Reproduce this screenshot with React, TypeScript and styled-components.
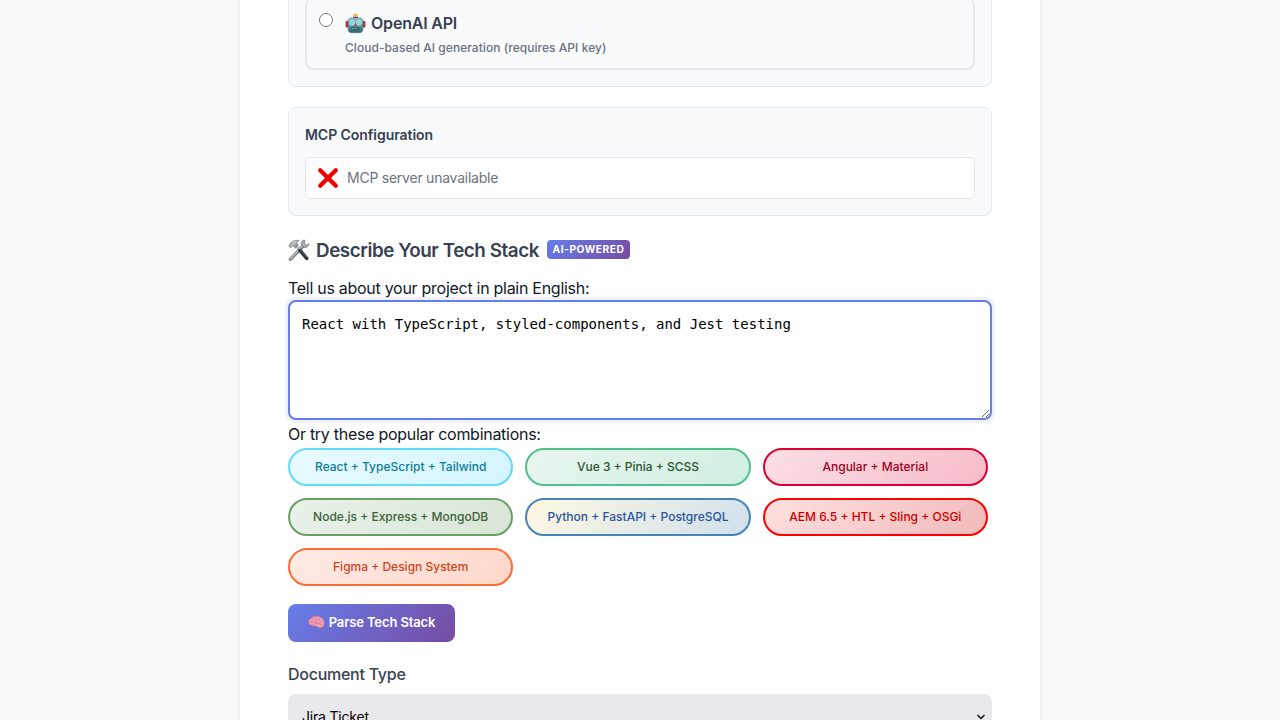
import React from 'react';
import styled, { createGlobalStyle } from 'styled-components';

const GlobalStyle = createGlobalStyle`
  * { box-sizing: border-box; }
  html, body { margin: 0; height: 720px; overflow: hidden; background: #f8fafc; }
  body { font-family: Inter, "Liberation Sans", sans-serif; font-size: 16px; color: #111827; }
`;

const Page = styled.div`
  height: 720px;
  overflow: hidden;
  background: #f8fafc;
  display: flex;
  justify-content: center;
`;

const Sheet = styled.main`
  width: 800px;
  height: 720px;
  padding: 0 48px;
  overflow: hidden;
  background: #fff;
  box-shadow: 0 1px 6px rgba(0, 0, 0, 0.1);
  display: flex;
  flex-direction: column;
`;

const Text = styled.span<{ $spacing?: number }>`
  white-space: nowrap;
  letter-spacing: ${(p) => p.$spacing ?? 0}px;
`;

const Panel = styled.section<{ $clipped?: boolean }>`
  flex: none;
  height: ${(p) => (p.$clipped ? 95 : 109)}px;
  margin-top: ${(p) => (p.$clipped ? -8 : 20)}px;
  padding: ${(p) => (p.$clipped ? '4px' : '16px')} 16px 16px;
  background: #f8fafc;
  border: 1px solid #e2e8f0;
  border-radius: 8px;
`;

const Option = styled.label`
  display: flex;
  height: 73px;
  padding: 14px 12px 0;
  border: 2px solid #e5e7eb;
  border-radius: 8px;
`;

const Radio = styled.input`
  width: 14px;
  height: 14px;
  margin: 0 12px 0 0;
  flex: none;
`;

const OptionBody = styled.div`
  display: flex;
  flex-direction: column;
`;

const OptionTitle = styled.div`
  display: flex;
  align-items: center;
  gap: 5px;
  height: 20px;
  font-size: 16px;
  font-weight: 600;
  color: #374151;
`;

const OptionHint = styled.div`
  margin-top: 7px;
  font-size: 12px;
  line-height: 16px;
  font-weight: 500;
  color: #6b7280;
`;

const PanelTitle = styled.h3`
  margin: 0;
  height: 33px;
  font-size: 14px;
  line-height: 21px;
  font-weight: 600;
  color: #374151;
`;

const Status = styled.div`
  display: flex;
  align-items: center;
  gap: 8px;
  height: 42px;
  padding: 0 11px;
  background: #fff;
  border: 1px solid #e2e8f0;
  border-radius: 6px;
  font-size: 14px;
  color: #6b7280;
`;

const StatusText = styled(Text)`
  padding-bottom: 2px;
`;

const Heading = styled.h2`
  flex: none;
  display: flex;
  align-items: center;
  height: 24px;
  margin: 22px 0 0;
  font-size: 18.8px;
  font-weight: 600;
  color: #374151;
`;

const HeadingText = styled(Text)`
  width: 223px;
  margin-left: 6px;
`;

const Badge = styled.span`
  display: flex;
  align-items: center;
  justify-content: center;
  width: 83px;
  height: 19px;
  margin: -2px 0 0 8px;
  border-radius: 4px;
  background: linear-gradient(135deg, #667eea, #764ba2);
  color: #fff;
  font-size: 10.2px;
  font-weight: 700;
`;

const FieldLabel = styled.label<{ $top: number }>`
  flex: none;
  margin-top: ${(p) => p.$top}px;
  height: 20px;
  line-height: 20px;
`;

const Description = styled.textarea`
  flex: none;
  display: block;
  width: 704px;
  height: 120px;
  margin: 2px 0 0;
  padding: 12px;
  border: 2px solid #667eea;
  border-radius: 8px;
  outline: none;
  box-shadow: 0 0 0 3px rgba(102, 126, 234, 0.1);
  color: #000;
  font: 14px/20px "DejaVu Sans Mono", monospace;
  resize: vertical;
`;

const Pills = styled.div`
  flex: none;
  display: grid;
  grid-template-columns: repeat(3, 225.33px);
  grid-auto-rows: 38px;
  gap: 12px;
  margin-top: 4px;
`;

const Pill = styled.button<{ $line: string; $from: string; $to: string; $ink: string }>`
  display: flex;
  align-items: center;
  justify-content: center;
  padding: 0 0 2px;
  border: 2px solid ${(p) => p.$line};
  border-radius: 20px;
  background: linear-gradient(135deg, ${(p) => p.$from}, ${(p) => p.$to});
  color: ${(p) => p.$ink};
  font: 500 12px Inter, sans-serif;
`;

const ParseButton = styled.button`
  flex: none;
  display: flex;
  align-items: center;
  justify-content: center;
  gap: 4px;
  width: 167px;
  height: 38px;
  margin-top: 18px;
  padding: 0 0 2px;
  border: 0;
  border-radius: 8px;
  background: linear-gradient(135deg, #667eea, #764ba2);
  color: #fff;
  font: 600 13px Inter, sans-serif;
`;

const TypeLabel = styled(FieldLabel)`
  font-weight: 500;
  color: #374151;
`;

const Select = styled.div`
  flex: none;
  display: flex;
  align-items: center;
  justify-content: space-between;
  height: 45px;
  margin-top: 10px;
  padding: 0 5px 0 14px;
  border-radius: 8px;
  background: #e9e8ed;
  color: #000;
  font-size: 14px;
`;

const RobotIcon = () => (
  <svg width="21" height="21" viewBox="0 0 21 21">
    <defs>
      <linearGradient id="robot" x1="0" y1="0" x2="0" y2="1">
        <stop offset="0" stopColor="#9fc3c4" />
        <stop offset=".5" stopColor="#5d9da5" />
        <stop offset="1" stopColor="#26616b" />
      </linearGradient>
    </defs>
    <rect x=".6" y="8" width="3" height="6.5" rx="1.2" fill="#b92a35" />
    <rect x="17.4" y="8" width="3" height="6.5" rx="1.2" fill="#b92a35" />
    <path d="M8 3.6h5v2H8z" fill="#5b4a86" />
    <ellipse cx="10.5" cy="2.1" rx="2.2" ry="1.7" fill="#f9b52c" />
    <path d="M5 4.9h11l2 2v9c0 2.3-1.3 3.8-3.5 3.8h-8C4.300 19.700 3 18.200 3 15.900V6.900z" fill="url(#robot)" stroke="#47777f" strokeWidth=".5" />
    <circle cx="7" cy="9.8" r="2.3" fill="#45c3db" stroke="#dffcff" strokeWidth=".8" />
    <circle cx="14" cy="9.8" r="2.3" fill="#45c3db" stroke="#dffcff" strokeWidth=".8" />
    <circle cx="7" cy="9.8" r=".8" fill="#fff" />
    <circle cx="14" cy="9.8" r=".8" fill="#fff" />
    <path d="M10.5 10.5l1.4 2.4H9.100z" fill="#df3038" />
    <rect x="6.5" y="14.2" width="8" height="2.4" rx="1.100" fill="#173d45" />
    <path d="M7.300 15.400h6.500" stroke="#e4eeee" strokeWidth="1" strokeDasharray="1.200 .9" />
  </svg>
);

const CrossIcon = () => (
  <svg width="22" height="22" viewBox="0 0 22 22">
    <path d="M3.200 3.200l15.600 15.600M18.800 3.200L3.200 18.800" stroke="#ee0202" strokeWidth="4.300" strokeLinecap="round" />
  </svg>
);

const ToolsIcon = () => (
  <svg width="22" height="22" viewBox="0 0 22 22">
    <defs>
      <linearGradient id="steel" x1="0" y1="0" x2="1" y2="1">
        <stop offset="0" stopColor="#737b80" />
        <stop offset=".45" stopColor="#b5bcc0" />
        <stop offset="1" stopColor="#62686e" />
      </linearGradient>
    </defs>
    <path d="M2.4 20.2L15.2 7" stroke="#74797d" strokeWidth="3.3" strokeLinecap="round" />
    <path d="M2.3 19.8L15.5 6.2" stroke="#c9ced1" strokeWidth="1.2" strokeLinecap="round" />
    <path d="M16.7 1.1c-2.5.1-4 2-3.5 4.5l3 2.9c2.4.3 4.7-1.2 4.9-3.7l-2.5 1.4-2.3-1.9z" fill="#a5adb1" stroke="#687177" strokeWidth=".7" />
    <path d="M9.3 8.5l3 3" stroke="#9da4a8" strokeWidth="2.2" />
    <path d="M12 11.5l6.7 7.8" stroke="#303236" strokeWidth="3.5" strokeLinecap="round" />
    <path d="M12.4 11.3l6.6 7.4" stroke="#74777b" strokeWidth=".8" />
    <path d="M.9 7.2l1.2-2.6C4.2 2 7.5.7 11.2 1.5c-1.5.3-2.4 1.3-2.3 2.8l1.6 2-2.9 3-2.3-2.2-1 .2-1.7 1.6z" fill="url(#steel)" stroke="#646b70" strokeWidth=".6" />
    <path d="M3.6 4.6c1.5-1.5 2.9-2 4.4-2" stroke="#e1e5e7" strokeWidth=".9" fill="none" />
  </svg>
);

const BrainIcon = () => (
  <svg width="17" height="15" viewBox="0 0 17 15">
    <path d="M10 10.500l3.500.8.4 2.500h-1.700l-1-1.500z" fill="#b85d77" />
    <g transform="translate(0 -.4)">
      <path d="M.7 8.2C.2 5.8 1.8 4 3.4 3.6 4.6 1.8 7 1.3 8.4 1.8c1.7-.6 3.6.2 4.4 1.4 2 .4 3.100 2.200 2.900 3.700 1.100 1.800.6 4.300-1.100 5.200-1.200 1.100-3.200.9-4.300.200-1.500.3-2.500-.4-3-1.300-1.500.8-2.900.6-3.700-.5C1.900 10.500.8 9.700.7 8.200z" fill="#f2a0b3" stroke="#c87590" strokeWidth=".5" />
      <path d="M3.2 4c1 0 1.8.5 2 1.3M1.5 8c1-1.3 2.2-1.500 3.200-.7M6 2.800c1.300.1 1.800.8 1.800 1.800s1 1.700 2 1.200M11.200 3.400c-1 .7-.9 1.600 0 2.100s2.100.3 2.400 1.500M6.200 7c1.300-.3 2 .2 2.200 1.200M4 10.200c1-.5 1.600-1.400 3-1.100s2.700.5 3.700-.7M11 8.600c1.500-.1 2.300.7 2.200 1.800" fill="none" stroke="#c56c86" strokeWidth=".65" strokeLinecap="round" />
    </g>
  </svg>
);

const Chevron = () => (
  <svg width="12" height="8" viewBox="0 0 12 8">
    <path d="M2.5 2L6 5.5 9.5 2" fill="none" stroke="#111" strokeWidth="1.5" />
  </svg>
);

const combos = [
  { label: 'React + TypeScript + Tailwind', line: '#61dafb', from: '#e8faff', to: '#d4f5ff', ink: '#0a7e95' },
  { label: 'Vue 3 + Pinia + SCSS', line: '#4fc08d', from: '#e8f5ee', to: '#d0efe1', ink: '#2c5530' },
  { label: 'Angular + Material', line: '#dd0031', from: '#fbdfe5', to: '#f6bcc8', ink: '#a0001f' },
  { label: 'Node.js + Express + MongoDB', line: '#68a063', from: '#eaf2e9', to: '#d7e5d6', ink: '#3c6238' },
  { label: 'Python + FastAPI + PostgreSQL', line: '#4584b6', from: '#fff8e2', to: '#d0e0ed', ink: '#2a569c' },
  { label: 'AEM 6.5 + HTL + Sling + OSGi', line: '#ff0000', from: '#ffe0e0', to: '#f0baba', ink: '#cc0000' },
  { label: 'Figma + Design System', line: '#ff6b35', from: '#ffebe5', to: '#ffd7ca', ink: '#cf451d' },
];

export default function App() {
  return (
    <Page>
      <GlobalStyle />
      <Sheet>
        <Panel $clipped>
          <Option>
            <Radio type="radio" name="provider" />
            <OptionBody>
              <OptionTitle>
                <RobotIcon />
                <Text $spacing={-0.2}>OpenAI API</Text>
              </OptionTitle>
              <OptionHint>
                <Text $spacing={0.04}>Cloud-based AI generation (requires API key)</Text>
              </OptionHint>
            </OptionBody>
          </Option>
        </Panel>
        <Panel>
          <PanelTitle>
            <Text $spacing={-0.05}>MCP Configuration</Text>
          </PanelTitle>
          <Status>
            <CrossIcon />
            <StatusText $spacing={-0.24}>MCP server unavailable</StatusText>
          </Status>
        </Panel>
        <Heading>
          <ToolsIcon />
          <HeadingText $spacing={-0.43}>Describe Your Tech Stack</HeadingText>
          <Badge>
            <Text $spacing={0.55}>AI-POWERED</Text>
          </Badge>
        </Heading>
        <FieldLabel $top={16}>
          <Text $spacing={-0.28}>Tell us about your project in plain English:</Text>
        </FieldLabel>
        <Description spellCheck={false} defaultValue="React with TypeScript, styled-components, and Jest testing" />
        <FieldLabel $top={4}>
          <Text $spacing={-0.28}>Or try these popular combinations:</Text>
        </FieldLabel>
        <Pills>
          {combos.map((c) => (
            <Pill key={c.label} $line={c.line} $from={c.from} $to={c.to} $ink={c.ink}>
              <Text>{c.label}</Text>
            </Pill>
          ))}
        </Pills>
        <ParseButton>
          <BrainIcon />
          <Text $spacing={-0.12}>Parse Tech Stack</Text>
        </ParseButton>
        <TypeLabel $top={22}>
          <Text $spacing={-0.26}>Document Type</Text>
        </TypeLabel>
        <Select>
          <Text $spacing={-0.2}>Jira Ticket</Text>
          <Chevron />
        </Select>
      </Sheet>
    </Page>
  );
}
